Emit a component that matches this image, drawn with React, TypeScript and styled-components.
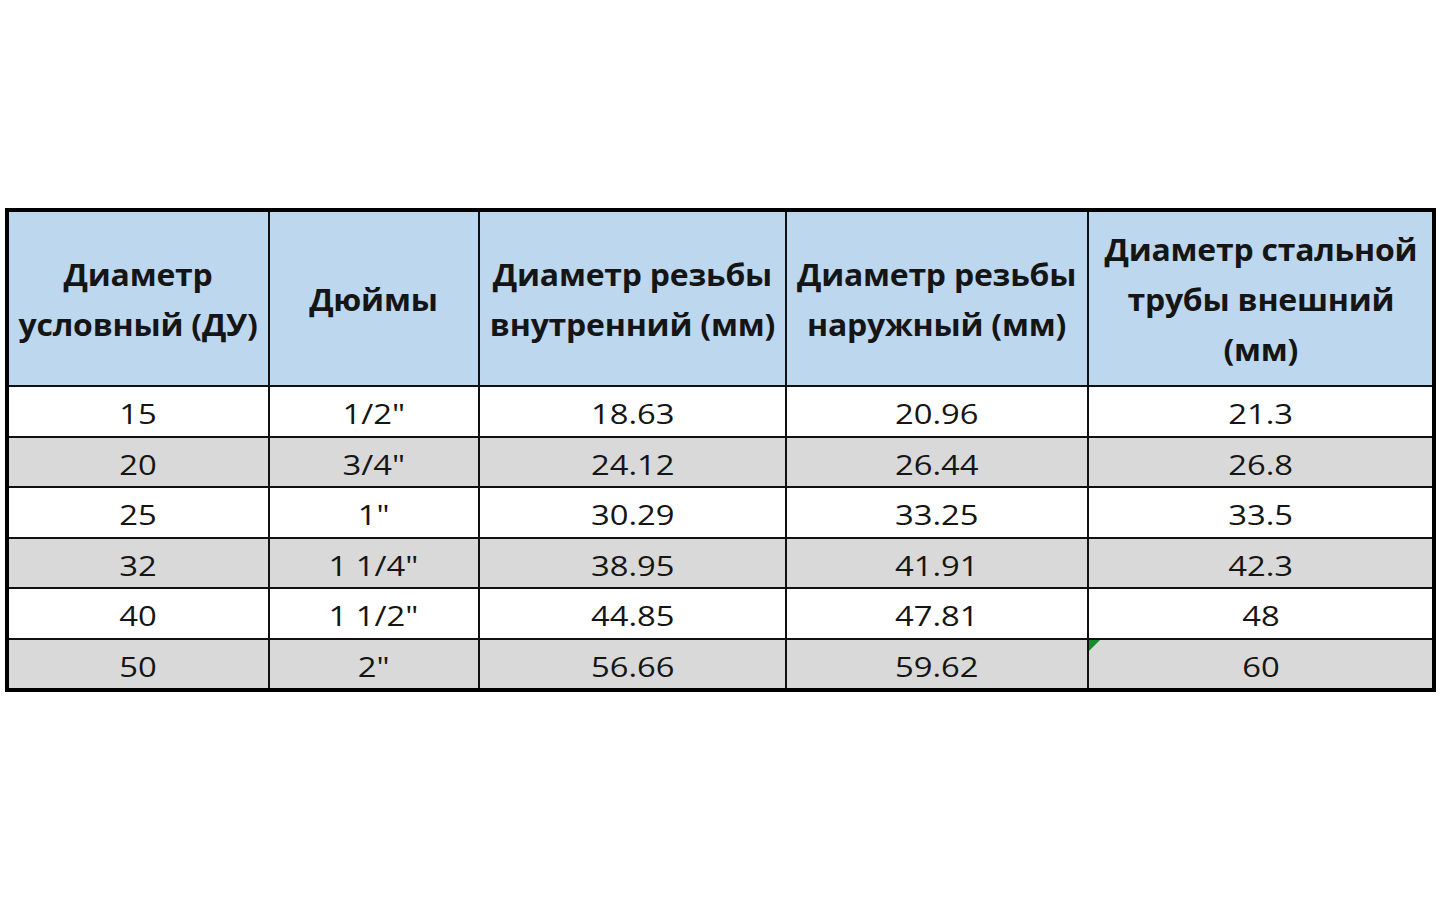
import React from "react";
import styled, { createGlobalStyle } from "styled-components";

const Global = createGlobalStyle`
  html, body { margin: 0; padding: 0; background: #ffffff; }
  body { font-family: "Open Sans", "Noto Sans", sans-serif; }
`;

const Page = styled.div`
  width: 1440px;
  height: 900px;
  padding: 208px 0 0 5px;
  box-sizing: border-box;
`;

const Table = styled.table`
  width: 1431px;
  border-collapse: collapse;
  border: 4px solid #000;
  table-layout: fixed;
`;

const HeadCell = styled.th`
  background: #bdd7ee;
  border: 2px solid #111;
  height: 173px;
  padding: 0;
  font-family: "Open Sans", "Noto Sans", sans-serif;
  font-weight: 700;
  font-size: 31px;
  line-height: 50px;
  color: #151515;
  text-align: center;
  vertical-align: middle;
  white-space: nowrap;
`;

const HeadText = styled.span`
  display: inline-block;
  transform: scaleX(1.03);
  letter-spacing: -0.2px;
`;

const Cell = styled.td<{ $grey: boolean }>`
  position: relative;
  background: ${(p) => (p.$grey ? "#d9d9d9" : "#ffffff")};
  border: 2px solid #111;
  height: 48.5px;
  padding: 0;
  font-family: "Open Sans", "Noto Sans", sans-serif;
  font-size: 28px;
  line-height: 48px;
  color: #151515;
  text-align: center;
  vertical-align: middle;
  white-space: nowrap;
`;

const CellText = styled.span`
  display: inline-block;
  transform: translateY(2px) scaleX(1.17);
`;

const Flag = styled.span`
  position: absolute;
  left: 0;
  top: 0;
  width: 0;
  height: 0;
  border-top: 11px solid #1a8a2a;
  border-right: 11px solid transparent;
`;

const widths = [261, 210, 306, 302, 345];

const headers: React.ReactNode[] = [
  <>Диаметр<br />условный (ДУ)</>,
  <>Дюймы</>,
  <>Диаметр резьбы<br />внутренний (мм)</>,
  <>Диаметр резьбы<br />наружный (мм)</>,
  <>Диаметр стальной<br />трубы внешний<br />(мм)</>,
];

const rows = [
  ["15", "1/2\"", "18.63", "20.96", "21.3"],
  ["20", "3/4\"", "24.12", "26.44", "26.8"],
  ["25", "1\"", "30.29", "33.25", "33.5"],
  ["32", "1 1/4\"", "38.95", "41.91", "42.3"],
  ["40", "1 1/2\"", "44.85", "47.81", "48"],
  ["50", "2\"", "56.66", "59.62", "60"],
];

export default function App() {
  return (
    <Page>
      <Global />
      <Table>
        <colgroup>
          {widths.map((w, i) => (
            <col key={i} style={{ width: w }} />
          ))}
        </colgroup>
        <thead>
          <tr>
            {headers.map((h, i) => (
              <HeadCell key={i}>
                <HeadText>{h}</HeadText>
              </HeadCell>
            ))}
          </tr>
        </thead>
        <tbody>
          {rows.map((r, ri) => (
            <tr key={ri}>
              {r.map((c, ci) => (
                <Cell key={ci} $grey={ri % 2 === 1}>
                  {ri === rows.length - 1 && ci === 4 && <Flag />}
                  <CellText>{c}</CellText>
                </Cell>
              ))}
            </tr>
          ))}
        </tbody>
      </Table>
    </Page>
  );
}
